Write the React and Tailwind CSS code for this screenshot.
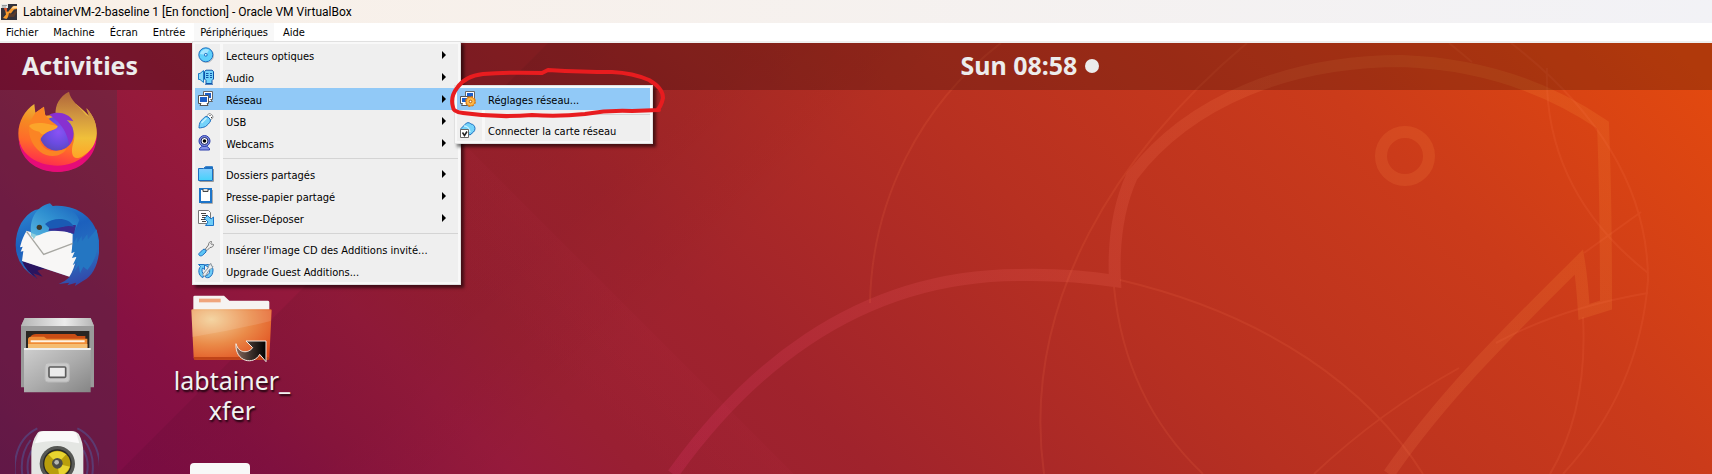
import React from 'react';

function DiscIcon() {
    return (
        <svg viewBox="0 0 16 16" className="w-4 h-4">
            <circle cx="8.500" cy="8.500" r="7" fill="none" stroke="#999" opacity=".6" />
            <circle cx="7.800" cy="7.800" r="7" fill="#5fd0fb" stroke="#1d6fc0" />
            <path d="M2 7a6 6 0 0 1 9-4L8 8z" fill="#a5e6ff" />
            <circle cx="7.800" cy="7.800" r="1.400" fill="#d8f4ff" stroke="#1d6fc0" />
        </svg>
    );
}

function AudioIcon() {
    return (
        <svg viewBox="0 0 16 16" className="w-4 h-4">
            <path d="M.5 4.500H2L5.500 1.500v12L2 10.500H.5z" fill="#8fdcfb" stroke="#1d7fc8" />
            <path d="M6.500 2.500 8 1.200h6L15.500 2.500V10L14 11.500v3H8v-3L6.500 10z" fill="#74d3fa" stroke="#1055a8" />
            <path d="M8 4.500h2.500M12 4.500h2M8 6.500h2.500M12 6.500h2M8 8.500h2.500M12 8.500h2" stroke="#1055a8" />
            <path d="M7 15.200h8" stroke="#1055a8" />
        </svg>
    );
}

function NetworkIcon() {
    return (
        <svg viewBox="0 0 16 16" className="w-4 h-4">
            <path d="M5.500.500h9v8h-2l2 2h-6v-2h-3z" fill="#fff" stroke="#666" />
            <path d="M7 2h6v5H7z" fill="#1d5fc8" />
            <path d="M.5 4.500h10v8H9l1 2H2l1-2H.5z" fill="#fff" stroke="#555" />
            <path d="M2 6h7v5H2z" fill="#1d5fc8" />
        </svg>
    );
}

function UsbIcon() {
    return (
        <svg viewBox="0 0 16 16" className="w-4 h-4">
            <path d="M8.500 3 11 .6c2 0 4 1.500 4 4L12.500 7z" fill="#fff" stroke="#888" />
            <path d="M11.500 2.500h1M13 4.500h1" stroke="#333" />
            <path d="M2.500 8.500C4.500 6 6.500 4 8 3.500c2 0 4.500 2 4.500 4.500-1 2-3 4-5 5.500-2 1-4.500 1.300-6.500 1.500C1 13 1.500 10 2.500 8.500z" fill="#74d3fa" stroke="#1d6fc0" />
            <path d="M3.500 10 8.500 5" stroke="#c8f1ff" strokeWidth="1.500" />
        </svg>
    );
}

function WebcamIcon() {
    return (
        <svg viewBox="0 0 16 16" className="w-4 h-4">
            <path d="M4.500 11h4l3 2.500v1.500H1.500v-1.500z" fill="#8392e8" stroke="#2a3cab" />
            <circle cx="6.500" cy="6" r="5.500" fill="#7c8be2" stroke="#2a3cab" />
            <circle cx="6.500" cy="6" r="3.500" fill="#fff" stroke="#1b2560" />
            <circle cx="6.500" cy="6" r="1.800" fill="#000" />
        </svg>
    );
}

function SharedFolderIcon() {
    return (
        <svg viewBox="0 0 16 16" className="w-4 h-4">
            <defs>
                <linearGradient id="shared" x1="0" y1="0" x2="0" y2="1">
                    <stop offset="0" stopColor="#8ecbff" />
                    <stop offset="1" stopColor="#45d2fa" />
                </linearGradient>
            </defs>
            <path d="M1.500 15.500h14V3" fill="none" stroke="#999" />
            <path d="M.5 2.500h5l2-1.800h7v13.800H.5z" fill="url(#shared)" stroke="#1d6fc0" />
            <path d="M7.500 1h6.500v2H5.500z" fill="#1d6fc0" />
        </svg>
    );
}

function ClipboardIcon() {
    return (
        <svg viewBox="0 0 16 16" className="w-4 h-4">
            <path d="M3 15.500h11.500V2" fill="none" stroke="#aaa" />
            <path d="M2 1h11v13H2z" fill="#fff" stroke="#1d74c8" strokeWidth="2" />
            <path d="M5 1v2.500h5V1" fill="#ddd" stroke="#444" />
        </svg>
    );
}

function DragDropIcon() {
    return (
        <svg viewBox="0 0 16 16" className="w-4 h-4">
            <path d="M.5.500h10l2 2v11H.5z" fill="#fff" stroke="#777" />
            <path d="M3 3.500h5M4 5.500h6M4 7.500h3M3 9.500h4M4 11.500h4" stroke="#444" />
            <path d="M6.500 8.500 9.500 5.500l3.500 3.500 2.500-2v8.500H7.500L10 12z" fill="#6fcdf7" stroke="#1d74c8" />
        </svg>
    );
}

function InsertDiscIcon() {
    return (
        <svg viewBox="0 0 16 16" className="w-4 h-4">
            <path d="M7 8.500 10.500 4c0-2.500 1.500-3.700 3-3.500.5 1-1 1.500-.5 2.500s2-.5 2.500.5c0 2-1.500 3-3.500 3L9 9.500z" fill="#eee" stroke="#777" />
            <path d="M1 12.500 5 8.500c1.500-1 3.500.5 3 2.500L4.500 14.300c-2 1.500-4.500 0-3.500-1.800z" fill="#5cc4f5" stroke="#1d6fc0" />
        </svg>
    );
}

function UpgradeIcon() {
    return (
        <svg viewBox="0 0 16 16" className="w-4 h-4">
            <path d="M.5 1.500h6v5L4.500 5C3.500 7 4 10 6 11.500l-1 3C0 13 0 6 2.500 3.500z" fill="#6fcdf7" stroke="#1d6fc0" />
            <path d="M7 2c5-2 8 2 8 5s-1 6-4 7.500c-2 .5-4 0-4-1.500 5-1 6-6 3-9z" fill="#6fcdf7" stroke="#1d6fc0" />
            <path d="M5 11 10 5c.5-2 1.500-4 3-4.500l.5 2.500 1.500.500c-.5 1.500-2 2.500-3.500 3L8 12c-1.500 2-3.500 1-3-1z" fill="#e8eef2" stroke="#8a949c" />
        </svg>
    );
}

function NetworkSettingsIcon() {
    return (
        <svg viewBox="0 0 16 16" className="w-4 h-4">
            <path d="M5.500.500h9v7h-9z" fill="#fff" stroke="#666" />
            <path d="M7 2h6v4H7z" fill="#1d5fc8" />
            <path d="M.5 5.500h9v7h-2v2h-6l1-2h-2z" fill="#fff" stroke="#555" />
            <path d="M2 7h6v4H2z" fill="#1d5fc8" />
            <circle cx="10.500" cy="10.500" r="4.500" fill="#fdb84a" stroke="#d8740c" strokeWidth="1.800" strokeDasharray="2.300 1.200" />
            <circle cx="10.500" cy="10.500" r="4.200" fill="#fdb84a" stroke="#e08215" strokeWidth=".6" />
            <circle cx="10.500" cy="10.500" r="1.300" fill="#fff" stroke="#b85c06" />
        </svg>
    );
}

function ConnectIcon() {
    return (
        <svg viewBox="0 0 16 16" className="w-4 h-4">
            <path d="M1 6.500 6.500 1c2-.8 3.500 0 4.500 1 2 0 4 2 4 4.500 0 1.500-.5 2.500-1.500 3.500L10 13l-9-5z" fill="#74d3fa" stroke="#1d6fc0" />
            <path d="M4 4c2.500 0 5.500 2 6 6" fill="none" stroke="#c8f1ff" strokeWidth="1.500" />
            <path d="M.5 7.500h8v8h-8z" fill="#fff" stroke="#666" />
            <path d="m2.500 10.500 2 3 2.500-4" fill="none" stroke="#222" strokeWidth="1.500" />
        </svg>
    );
}

function VirtualBoxIcon() {
    return (
        <svg viewBox="0 0 16 16" className="w-4 h-4">
            <path d="M0 0h16v16H0z" fill="#33323c" />
            <path d="M4 5.500 7 8l5-6h4v3l-3 .500-4 5-3.500 4.500L2 14l3-3.500z" fill="#f79a2c" />
            <path d="M8 9l4 1 3-4 1 2-3 5H7z" fill="#5a3a2a" />
            <path d="M10 4.500 13 2h3v2l-3 .500z" fill="#ffd9a0" />
            <path d="M0 0h7v4H0z" fill="#e6e6e6" />
            <path d="M1 1.500h5M1 3h4" stroke="#777" strokeWidth=".7" />
            <path d="M3 4h3v4L3.500 6z" fill="#e0542a" />
        </svg>
    );
}

function FirefoxLogo() {
    return (
        <svg viewBox="45 30 252 252" className="w-[84px] h-[84px] shrink-0">
            <defs>
                <linearGradient id="ffBody" x1=".65" y1=".1" x2=".4" y2="1">
                    <stop offset="0" stopColor="#e8bb3c" />
                    <stop offset=".3" stopColor="#f58a22" />
                    <stop offset=".6" stopColor="#ff6a2a" />
                    <stop offset=".85" stopColor="#ff3a45" />
                    <stop offset="1" stopColor="#f0205e" />
                </linearGradient>
                <linearGradient id="ffTail" x1=".5" y1="0" x2=".5" y2="1">
                    <stop offset="0" stopColor="#b0643a" />
                    <stop offset=".35" stopColor="#cf9440" />
                    <stop offset=".7" stopColor="#f0c03a" />
                    <stop offset="1" stopColor="#ffa526" />
                </linearGradient>
                <radialGradient id="ffGlobe" cx=".55" cy=".45" r=".6">
                    <stop offset="0" stopColor="#8a52f5" />
                    <stop offset=".6" stopColor="#6a4be0" />
                    <stop offset="1" stopColor="#5a48b8" />
                </radialGradient>
            </defs>
            <path d="M55 160C55 125 75 90 103 72L106 98 132 80 136 107 166 104 228 72C246 86 260 100 268 108L260 85C282 110 290 134 290 160 290 225 240 275 172 275S55 225 55 160Z" fill="url(#ffBody)" />
            <path d="M56 172C62 225 112 257 172 257S284 215 290 165C291 232 238 276 172 276S56 235 56 172Z" fill="#e50c78" />
            <path d="M167 104C164 75 180 48 207 35 212 62 235 75 252 98Q258 108 268 110L258 84C282 108 290 132 290 160 288 195 272 215 245 230 218 244 212 220 218 195 232 160 220 125 167 104Z" fill="url(#ffTail)" />
            <circle cx="170" cy="161" r="51" fill="url(#ffGlobe)" />
            <path d="M148 104C172 92 206 98 220 124 210 122 205 121 198 121 222 140 226 170 208 196 202 160 188 132 148 104Z" fill="#8830d0" />
            <path d="M106 98 132 80C131 92 133 102 140 110 150 122 165 130 173 138 170 150 148 150 136 160 128 166 124 172 119 182 128 212 165 222 200 205 190 228 150 238 120 215 95 196 80 160 90 125Z" fill="#fb8424" />
            <path d="M87 138C98 126 128 128 148 133 158 137 168 136 173 139 173 148 150 150 134 161 126 167 122 160 118 155 106 154 94 148 87 138Z" fill="#fba52a" />
        </svg>
    );
}

function ThunderbirdLogo() {
    return (
        <svg viewBox="45 366 252 252" className="w-[84px] h-[84px] shrink-0">
            <defs>
                <linearGradient id="tbBody" x1=".3" y1="0" x2=".7" y2="1">
                    <stop offset="0" stopColor="#2a83cf" />
                    <stop offset=".35" stopColor="#1c60bd" />
                    <stop offset=".7" stopColor="#2a70c0" />
                    <stop offset="1" stopColor="#3346a8" />
                </linearGradient>
                <linearGradient id="tbHead" x1="0" y1="1" x2="1" y2="0">
                    <stop offset="0" stopColor="#56b4e0" />
                    <stop offset=".5" stopColor="#2f8fd0" />
                    <stop offset="1" stopColor="#1c60bd" />
                </linearGradient>
            </defs>
            <path d="M47 495C47 445 72 405 105 390L160 378C235 372 296 420 298 495 299 545 280 588 250 602L225 618 228 608 202 616 208 608 176 612Q195 605 210 590L70 545Q85 560 110 594 48 560 47 495Z" fill="url(#tbBody)" />
            <path d="M66 543 135 565 112 572 128 590 100 580 112 596Q78 575 66 543Z" fill="#2a1560" />
            <path d="M80 452C66 475 62 495 60 502L68 500 62 515 70 513 66 543 208 590Q222 570 230 530L220 530 228 512 217 518 218 462 180 445 110 462Z" fill="#f8f7f6" />
            <path d="M80 455 131 523 219 490" fill="none" stroke="#a7a7a2" strokeWidth="4" />
            <path d="M95 470C85 425 105 380 150 370L158 378C190 376 225 385 238 420L220 462C180 445 145 450 118 465Z" fill="url(#tbHead)" />
            <path d="M150 440C180 448 200 430 228 436L222 462C200 452 170 452 145 452Z" fill="#3a2a90" />
            <path d="M135 432C160 412 205 410 222 440 195 432 175 448 150 446Z" fill="#1a5ab4" />
            <path d="M92 458 110 465 101 478Z" fill="#8fd0dc" />
            <circle cx="118" cy="442" r="8" fill="#3b3a2c" />
            <path d="M224 450 220 490 232 470 232 488 245 468 246 484 262 462 264 478 290 448Q305 520 262 570L250 560 240 580 236 555 222 575 232 545 218 556 230 530 216 534 224 515 214 520Z" fill="#2476c2" />
        </svg>
    );
}

function FilesLogo() {
    return (
        <svg viewBox="45 72 252 252" className="w-[84px] h-[84px] shrink-0">
            <defs>
                <linearGradient id="cabinet" x1="0" y1="0" x2="1" y2="1">
                    <stop offset="0" stopColor="#cfcfcf" />
                    <stop offset=".5" stopColor="#adadad" />
                    <stop offset="1" stopColor="#858585" />
                </linearGradient>
                <linearGradient id="cabinetTop" x1="0" y1="0" x2="1" y2="0">
                    <stop offset="0" stopColor="#b5b5b5" />
                    <stop offset=".6" stopColor="#ececec" />
                    <stop offset="1" stopColor="#b5b5b5" />
                </linearGradient>
            </defs>
            <path d="M63 108 74 84H272L282 108V292H63Z" fill="#9a9a9a" />
            <path d="M63 108 74 84H272L282 108Z" fill="url(#cabinetTop)" />
            <path d="M78 123H268V178H78Z" fill="#2a2522" />
            <path d="M92 140Q96 132 108 132H225L232 138H256V150H86Z" fill="#c94d14" />
            <path d="M84 146Q86 140 92 140H132L140 146H262V178H84Z" fill="#f08c36" />
            <path d="M92 154H254" stroke="#fff3e2" strokeWidth="6" />
            <path d="M84 162H262V178H84Z" fill="#f5bd72" />
            <path d="M72 174H272V307H72Z" fill="url(#cabinet)" />
            <path d="M72 177H272" stroke="#efefef" strokeWidth="6" />
            <rect x="135" y="219" width="73" height="57" rx="9" fill="#c9c9c9" stroke="#b9b9b9" strokeWidth="3" />
            <rect x="147" y="231" width="50" height="31" rx="3" fill="#ebebeb" stroke="#5c5c5c" strokeWidth="5" />
        </svg>
    );
}

function RhythmboxLogo() {
    return (
        <svg viewBox="45 408 252 252" className="w-[84px] h-[84px] shrink-0">
            <g fill="none" stroke="#4b6cb3" strokeWidth="6" opacity=".4">
                <path d="M112 415C40 450 30 540 60 620M92 450C60 490 58 540 78 600M96 480C78 510 78 540 92 580" />
                <path d="M232 415C304 450 314 540 284 620M252 450C284 490 286 540 266 600M250 480C268 510 268 540 252 580" />
            </g>
            <path d="M112 430Q116 423 130 423H215Q228 423 236 432 250 455 250 490V660H94V490Q94 455 112 430Z" fill="#e4e6e3" />
            <path d="M116 430Q120 424 132 424H213Q226 424 230 432L238 460Q172 445 104 460Z" fill="#fafafa" />
            <circle cx="172" cy="521" r="53" fill="#565854" />
            <circle cx="172" cy="521" r="43" fill="#282826" />
            <circle cx="172" cy="521" r="39" fill="#b89e0c" />
            <path d="M172 521 145 493Q172 474 199 493ZM172 521 210 530Q200 552 178 559Z" fill="#e8d430" />
            <circle cx="172" cy="520" r="16" fill="#4b4c46" />
            <circle cx="170" cy="517" r="7" fill="#b8b9b3" />
        </svg>
    );
}

function FolderLink() {
    return (
        <svg viewBox="573 14 246 204" className="w-[82px] h-[68px] shrink-0">
            <defs>
                <radialGradient id="folder" cx=".25" cy=".2" r="1">
                    <stop offset="0" stopColor="#f3cf96" />
                    <stop offset=".5" stopColor="#ea8a48" />
                    <stop offset="1" stopColor="#e0471a" />
                </radialGradient>
                <linearGradient id="linkArrow" x1="0" y1="0" x2="1" y2="0">
                    <stop offset="0" stopColor="#8a6a5c" />
                    <stop offset=".5" stopColor="#3c302b" />
                    <stop offset="1" stopColor="#000" />
                </linearGradient>
            </defs>
            <path d="M580 20Q580 16 584 16H672L688 31H804Q808 31 808 36V70H580Z" fill="#f6f3f1" />
            <path d="M597 25H662V36H597Z" fill="#f0a57c" />
            <path d="M574 60Q574 57 578 57H811Q815 57 815 60L808 202Q808 208 802 208H588Q581 208 581 202Z" fill="url(#folder)" />
            <path d="M575 60H814L812 92Q700 120 577 140Z" fill="#fff" opacity=".12" />
            <path d="M581 200H808V208H582Z" fill="#bf4318" />
            <path d="M708 160C704 215 762 226 779 192L798 214V152H738L758 172C745 190 716 190 708 160Z" fill="url(#linkArrow)" stroke="#f5ece6" strokeWidth="3" />
        </svg>
    );
}

function Wallpaper() {
    return (
        <svg
            viewBox="0 43 1712 431"
            preserveAspectRatio="xMinYMin slice"
            className="absolute inset-0 w-full h-full"
            aria-hidden="true"
        >
            <defs>
                <linearGradient id="fold" gradientUnits="userSpaceOnUse" x1="210" y1="380" x2="410" y2="580">
                    <stop offset="0" stopColor="#000" stopOpacity=".06" />
                    <stop offset=".5" stopColor="#000" stopOpacity=".05" />
                    <stop offset="1" stopColor="#000" stopOpacity="0" />
                </linearGradient>
                <linearGradient id="foldLight" gradientUnits="userSpaceOnUse" x1="600" y1="280" x2="530" y2="350">
                    <stop offset="0" stopColor="#ff4080" stopOpacity=".03" />
                    <stop offset="1" stopColor="#ff4080" stopOpacity="0" />
                </linearGradient>
                <linearGradient id="outlineInk" gradientUnits="userSpaceOnUse" x1="680" y1="474" x2="1500" y2="100">
                    <stop offset="0" stopColor="#ff3c80" />
                    <stop offset=".5" stopColor="#ff7466" />
                    <stop offset="1" stopColor="#ff9a3c" />
                </linearGradient>
            </defs>
            <path d="M117 474 548 43H1100V474Z" fill="url(#fold)" />
            <path d="M363 43 794 474H400Z" fill="url(#foldLight)" />
            <g fill="none" stroke="url(#outlineInk)" strokeWidth="12" opacity=".16">
                <path d="M673 474C740 380 850 275 1020 275Q1070 274 1115 281Q1112 220 1132 176C1190 100 1290 61 1402 61Q1515 65 1603 125Q1606 200 1606 305L1584 312Q1582 280 1579 262C1500 340 1440 400 1389 474" />
                <circle cx="1405" cy="156" r="24" />
            </g>
            <g fill="none" stroke="#ff7a50" strokeWidth="2" opacity=".13">
                <path d="M870 303C872 200 920 105 1001 43" />
                <path d="M1247 43C1120 150 1020 300 1044 474" />
                <path d="M1120 280C1270 315 1370 390 1423 474" />
                <path d="M1114 287Q1125 400 1203 474" />
                <path d="M1314 474Q1380 412 1459 368" />
                <path d="M1496 343Q1560 308 1648 293" />
                <path d="M1449 43 1472 62" />
                <path d="M1511 43C1610 120 1648 200 1648 280Q1640 390 1563 474" />
                <path d="M1547 68Q1543 190 1648 273" />
                <path d="M1584 253 1641 212" />
                <path d="M1583 317Q1588 410 1550 474" />
            </g>
        </svg>
    );
}

const deviceMenu = [
    [
        { label: 'Lecteurs optiques', icon: DiscIcon, sub: true },
        { label: 'Audio', icon: AudioIcon, sub: true },
        { label: 'Réseau', icon: NetworkIcon, sub: true, active: true },
        { label: 'USB', icon: UsbIcon, sub: true },
        { label: 'Webcams', icon: WebcamIcon, sub: true },
    ],
    [
        { label: 'Dossiers partagés', icon: SharedFolderIcon, sub: true },
        { label: 'Presse-papier partagé', icon: ClipboardIcon, sub: true },
        { label: 'Glisser-Déposer', icon: DragDropIcon, sub: true },
    ],
    [
        { label: "Insérer l'image CD des Additions invité...", icon: InsertDiscIcon },
        { label: 'Upgrade Guest Additions...', icon: UpgradeIcon },
    ],
];

const networkMenu = [
    [{ label: 'Réglages réseau...', icon: NetworkSettingsIcon, active: true }],
    [{ label: 'Connecter la carte réseau', icon: ConnectIcon }],
];

function Menu({ groups, className }) {
    return (
        <div
            role="menu"
            className={`absolute border border-[#e0e0e0] bg-[#f8f8f8] p-0.5 shadow-[3px_3px_3px_rgba(0,0,0,0.55)] ${className}`}
        >
            {groups.map((items, i) => (
                <div key={i}>
                    {i > 0 && (
                        <div className="flex h-[9px]">
                            <div className="w-[25px] bg-[#efefef]" />
                            <div className="ml-[3px] flex-1 flex items-center bg-[#efefef]">
                                <div className="h-px w-full bg-[#d4d4d4]" />
                            </div>
                        </div>
                    )}
                    {items.map(({ label, icon: Icon, sub, active }) => (
                        <button
                            key={label}
                            type="button"
                            role="menuitem"
                            className={
                                active
                                    ? 'flex w-full h-[22px] text-left bg-[#91c9f7]'
                                    : 'flex w-full h-[22px] text-left'
                            }
                        >
                            <span className={active ? 'w-[25px] h-full pl-[3px] pt-[3px]' : 'w-[25px] h-full pl-[3px] pt-[3px] bg-[#efefef]'}>
                                <Icon />
                            </span>
                            <span className={active ? 'ml-[3px] flex-1 h-full flex items-center pl-[3px] pr-3' : 'ml-[3px] flex-1 h-full flex items-center pl-[3px] pr-3 bg-[#efefef]'}>
                                <span className="flex-1 pt-[3px] whitespace-nowrap">{label}</span>
                                {sub && (
                                    <svg viewBox="0 0 4 8" className="w-1 h-2">
                                        <path d="M0 0l4 4-4 4z" />
                                    </svg>
                                )}
                            </span>
                        </button>
                    ))}
                </div>
            ))}
        </div>
    );
}

function MenuBar() {
    return (
        <nav className="relative z-10 flex h-5 shrink-0 pl-1.5 bg-white border-b-2 border-[#efefef] font-['DejaVu_Sans_Condensed','DejaVu_Sans',sans-serif] text-[11px] leading-4 text-black">
            <div className="flex gap-[15px]">
                <button type="button" className="pt-0.5">Fichier</button>
                <button type="button" className="pt-0.5">Machine</button>
                <button type="button" className="pt-0.5">Écran</button>
                <button type="button" className="pt-0.5">Entrée</button>
                <button type="button" className="pt-0.5 -mx-1.5 px-1.5 bg-[#f8f8f8]" aria-haspopup="menu" aria-expanded="true">
                    Périphériques
                </button>
                <button type="button" className="pt-0.5">Aide</button>
            </div>
            <Menu groups={deviceMenu} className="left-48 top-[18px] w-[269px]" />
            <Menu groups={networkMenu} className="left-[454px] top-[62px] w-[199px]" />
        </nav>
    );
}

export default function App() {
    return (
        <div className="relative h-screen flex flex-col overflow-hidden">
            <header className="flex items-center gap-1.5 h-[23px] shrink-0 pl-px bg-linear-to-r from-[#f9f0e7] to-[#f2f2f6] text-black">
                <VirtualBoxIcon />
                <h1 className="font-[Roboto,'Open_Sans',sans-serif] text-xs">
                    LabtainerVM-2-baseline 1 [En fonction] - Oracle VM VirtualBox
                </h1>
            </header>
            <MenuBar />

            <main className="relative flex-1 min-h-0 flex flex-col text-[#ececec] text-[25px] font-['Noto_Sans','Open_Sans',sans-serif] bg-[linear-gradient(45deg,#730b48_0%,#7f0d46_6%,#861142_13%,#8c153e_17%,#961a3b_24%,#991f32_30%,#a0232c_41%,#b73021_60%,#cb3b1a_80%,#e2490f_98%)]">
                <Wallpaper />
                <div className="relative flex items-center h-[47px] shrink-0 pb-0.5 bg-black/22 font-bold [text-shadow:1px_1px_2px_rgba(0,0,0,0.4)]">
                    <div className="w-[56.1%] pl-[22px]">
                        <button type="button">Activities</button>
                    </div>
                    <button type="button" className="flex items-center gap-2">
                        Sun 08:58
                        <span className="w-3.5 h-3.5 rounded-full bg-[#ececec]" />
                    </button>
                </div>

                <div className="relative flex flex-1 min-h-0">
                    <aside className="w-[117px] shrink-0 flex flex-col items-start gap-7 pl-[15px] overflow-hidden bg-[#383846]/30">
                        <FirefoxLogo />
                        <ThunderbirdLogo />
                        <FilesLogo />
                        <RhythmboxLogo />
                    </aside>
                    <section className="flex flex-col items-center w-[230px] overflow-hidden pt-[205px]">
                        <FolderLink />
                        <p className="mt-0.5 text-center leading-[30px] text-[#f2f2f2] [text-shadow:1px_2px_2px_rgba(0,0,0,0.8)]">
                            labtainer_
                            <br />
                            xfer
                        </p>
                        <div className="mt-[38px] mr-6 w-[60px] h-16 shrink-0 rounded-sm bg-[#f8f8f8]" />
                    </section>
                </div>
            </main>

            {/* pen mark round the network settings entry */}
            <svg viewBox="0 0 220 56" className="absolute z-20 left-[448px] top-[65px] w-[220px] h-14 pointer-events-none" aria-hidden="true">
                <path
                    d="M211 45 184 46Q160 45 137 49Q110 52 84 50Q50 53 15 48Q5 47 5 42Q2 32 9 23Q17 11 35 9Q60 7 94 8L100 5Q135 7 164 7Q185 8 201 15Q215 23 215 33Q213 42 209 45"
                    fill="none"
                    stroke="#e81c1f"
                    strokeWidth="4"
                    strokeLinecap="round"
                    strokeLinejoin="round"
                />
            </svg>
        </div>
    );
}
